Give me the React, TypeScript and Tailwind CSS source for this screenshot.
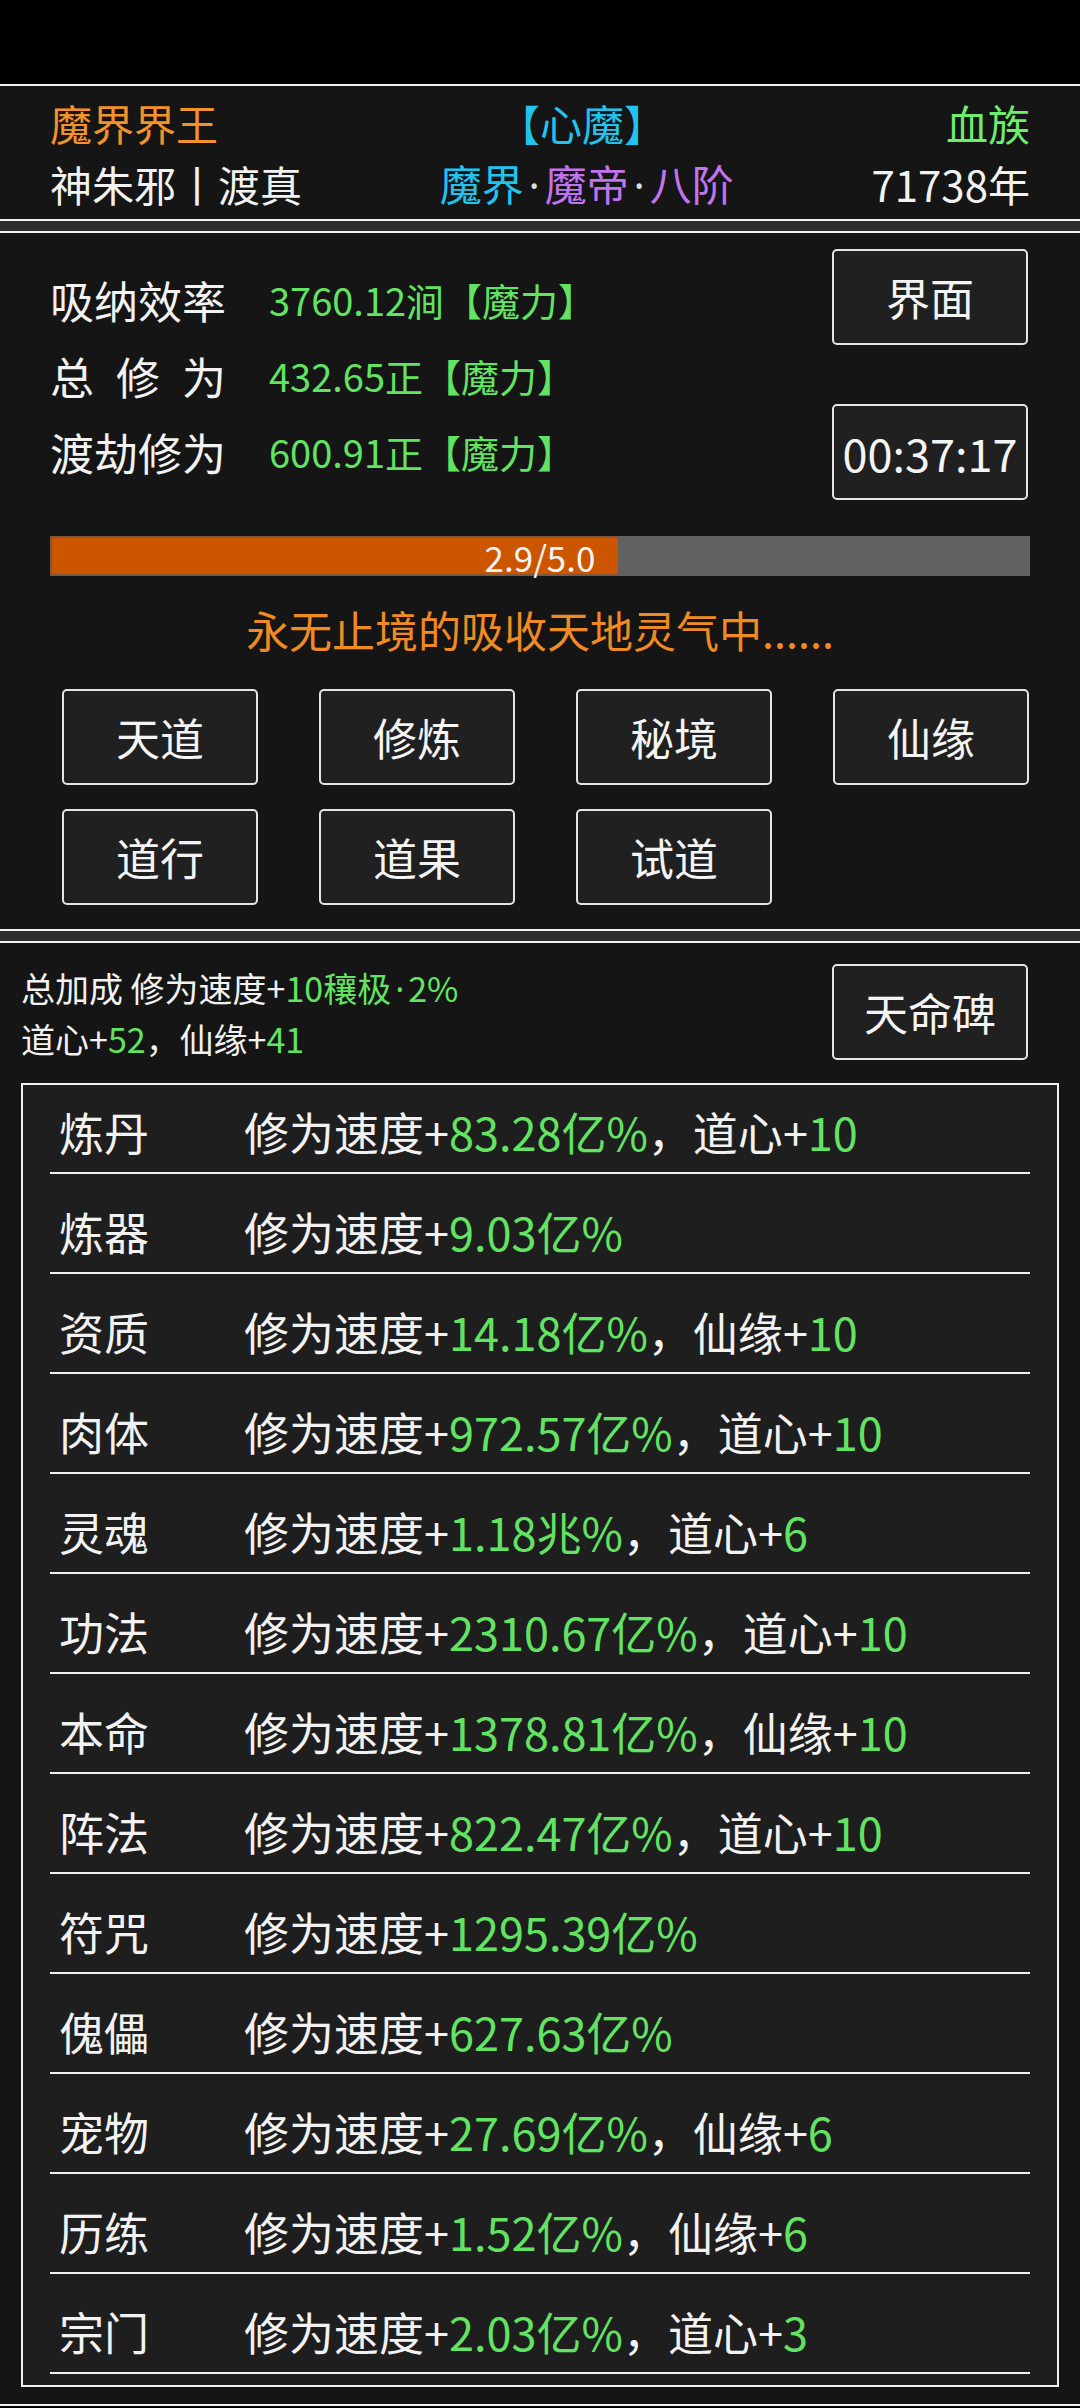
import React from "react";

const G = "text-[#62e462]";
const DOT = "inline-block w-[0.5em] text-center font-['Noto_Sans',sans-serif]";

const rows: { name: string; val: string; extra?: [string, string] }[] = [
  { name: "炼丹", val: "83.28亿%", extra: ["道心", "10"] },
  { name: "炼器", val: "9.03亿%" },
  { name: "资质", val: "14.18亿%", extra: ["仙缘", "10"] },
  { name: "肉体", val: "972.57亿%", extra: ["道心", "10"] },
  { name: "灵魂", val: "1.18兆%", extra: ["道心", "6"] },
  { name: "功法", val: "2310.67亿%", extra: ["道心", "10"] },
  { name: "本命", val: "1378.81亿%", extra: ["仙缘", "10"] },
  { name: "阵法", val: "822.47亿%", extra: ["道心", "10"] },
  { name: "符咒", val: "1295.39亿%" },
  { name: "傀儡", val: "627.63亿%" },
  { name: "宠物", val: "27.69亿%", extra: ["仙缘", "6"] },
  { name: "历练", val: "1.52亿%", extra: ["仙缘", "6"] },
  { name: "宗门", val: "2.03亿%", extra: ["道心", "3"] },
];

function Btn({ children, className = "" }: { children: React.ReactNode; className?: string }) {
  return (
    <div
      className={
        "w-[196px] h-[96px] border-2 border-[#e4e4e4] rounded-[5px] bg-[#202020] flex items-center justify-center text-[44px] leading-none whitespace-nowrap text-[#f4f4f4] " +
        className
      }
    >
      {children}
    </div>
  );
}

export default function App() {
  return (
    <div className="w-[1080px] min-h-[2408px] bg-black font-['Noto_Sans_CJK_SC','Noto_Sans',sans-serif] text-[#f2f2f2]">
      <div className="h-[84px] bg-black" />
      <div className="bg-[#2e2e2e] flex flex-col gap-[10px]">
        {/* Box 1 */}
        <div className="border-y-2 border-[#f2f2f2] bg-[#151515] px-[50px] pt-[7px] pb-[5px] flex flex-col gap-[1px] text-[42px] whitespace-nowrap">
          <div className="h-[60px] flex items-center justify-between leading-none">
            <span className="text-[#f3922a]">魔界界王</span>
            <span className="text-[#22c4ee]">【心魔】</span>
            <span className="text-[#6eee6e]">血族</span>
          </div>
          <div className="h-[60px] flex items-center justify-between leading-none">
            <span>神朱邪丨渡真</span>
            <span>
              <span className="text-[#22c4ee]">魔界</span>
              <span className={"text-[#dddddd] " + DOT}>·</span>
              <span className="text-[#c274ee]">魔帝</span>
              <span className={"text-[#dddddd] " + DOT}>·</span>
              <span className="text-[#c274ee]">八阶</span>
            </span>
            <span>71738年</span>
          </div>
        </div>

        {/* Box 2 */}
        <div className="border-y-2 border-[#f2f2f2] bg-[#151515] px-[50px] pt-[16px] pb-[24px] flex flex-col">
          <div className="flex justify-between">
            <div className="flex flex-col pt-[13px]">
              {[
                ["吸纳效率", "3760.12涧【魔力】"],
                ["总修为", "432.65正【魔力】"],
                ["渡劫修为", "600.91正【魔力】"],
              ].map(([l, v], i) => (
                <div key={i} className="h-[76px] flex items-center whitespace-nowrap">
                  {i === 1 ? (
                    <div className="w-[176px] flex justify-between text-[44px] leading-none">
                      <span>总</span>
                      <span>修</span>
                      <span>为</span>
                    </div>
                  ) : (
                    <div className="w-[176px] text-[44px] leading-none">{l}</div>
                  )}
                  <div className={"ml-[43px] text-[38px] leading-none " + G}>{v}</div>
                </div>
              ))}
            </div>
            <div className="flex flex-col gap-[59px] mr-[2px]">
              <Btn>界面</Btn>
              <Btn className="text-[45px]">00:37:17</Btn>
            </div>
          </div>

          <div className="mt-[36px] h-[40px] bg-[#616161] relative flex">
            <div className="w-[58%] h-full bg-[#cc5500] border-y-2 border-l-2 border-[#80573a]" />
            <div className="absolute inset-0 flex items-center justify-center text-[35px] leading-none text-[#f4f4f4]">
              2.9/5.0
            </div>
          </div>

          <div className="mt-[25px] h-[56px] flex items-center justify-center text-[43px] leading-none whitespace-nowrap text-[#f08a22]">
            永无止境的吸收天地灵气中......
          </div>

          <div className="mt-[32px] ml-[12px] grid grid-cols-[196px_196px_196px_196px] gap-x-[61px] gap-y-[24px]">
            <Btn>天道</Btn>
            <Btn>修炼</Btn>
            <Btn>秘境</Btn>
            <Btn>仙缘</Btn>
            <Btn>道行</Btn>
            <Btn>道果</Btn>
            <Btn>试道</Btn>
          </div>
        </div>

        {/* Box 3 */}
        <div className="border-y-2 border-[#f2f2f2] bg-[#151515] px-[21px] pt-[20px] pb-[17px] flex flex-col">
          <div className="flex justify-between items-start">
            <div className="text-[34px] leading-[50px] whitespace-nowrap">
              <div>
                总加成 修为速度+
                <span className={G}>
                  10穰极<span className={DOT}>·</span>2%
                </span>
              </div>
              <div>
                道心+<span className={G}>52</span>，仙缘+<span className={G}>41</span>
              </div>
            </div>
            <Btn className="mt-[1px] mr-[31px]">天命碑</Btn>
          </div>

          <div className="mt-[19px] border-2 border-[#f2f2f2] bg-[#1e1e1e] pb-[11px] flex flex-col">
            {rows.map((r, i) => (
              <div
                key={i}
                className="mx-[27px] pt-[27px] first:pt-[16px] pb-[11px] border-b-2 border-[#f2f2f2] flex items-center"
              >
                <div className="h-[60px] flex items-center text-[45px] leading-none whitespace-nowrap">
                  <div className="w-[194px] pl-[9px]">{r.name}</div>
                  <div>
                    修为速度+<span className={G}>{r.val}</span>
                    {r.extra && (
                      <>
                        ，{r.extra[0]}+<span className={G}>{r.extra[1]}</span>
                      </>
                    )}
                  </div>
                </div>
              </div>
            ))}
          </div>
        </div>
      </div>
    </div>
  );
}
